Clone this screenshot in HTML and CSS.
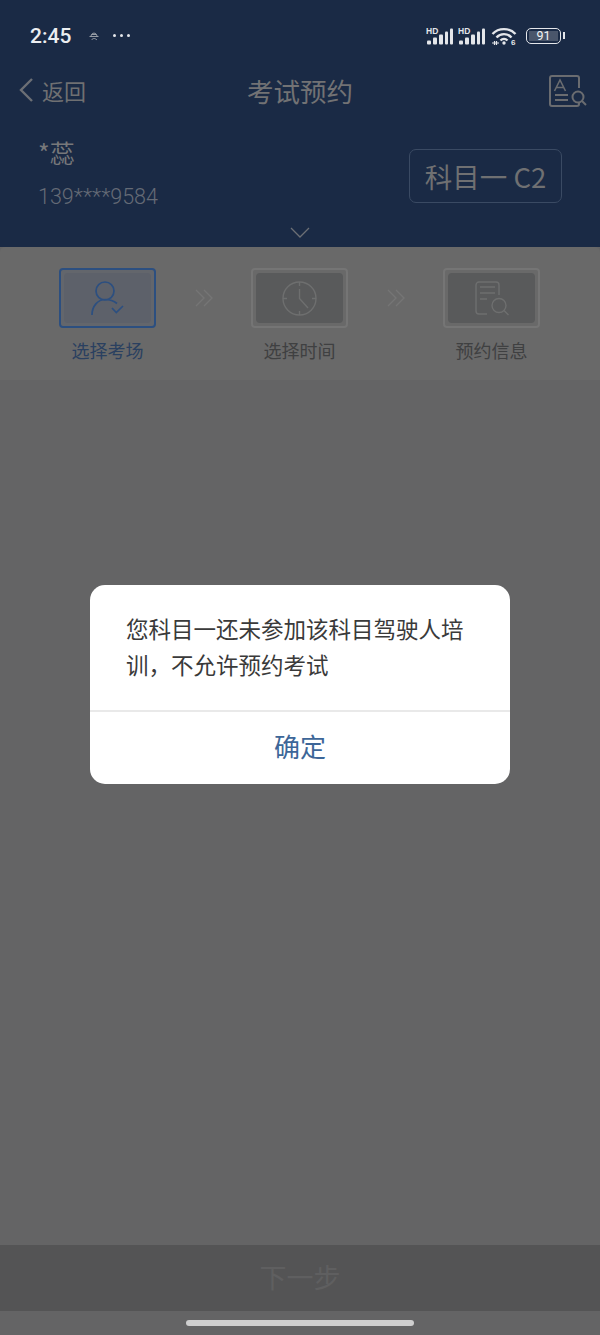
FILE: index.html
```html
<!DOCTYPE html>
<html lang="zh-CN">
<head>
    <meta charset="UTF-8">
    <meta name="viewport" content="width=device-width, initial-scale=1.0">
    <title>考试预约</title>
    <link rel="stylesheet" href="styles.css">
</head>
<body>
<div class="page">

    <header class="top">
        <div class="status">
            <span class="time">2:45</span>
            <svg class="hat" width="10" height="9" viewBox="0 0 10 9" fill="none" stroke="#a4a8af" stroke-width="0.900">
                <path d="M2 4.500 C2 0 8 0 8 4.500 M0.500 4.500 H9.500 M2.500 8 C4 6 6 6 8 8 M3 2.500 H7"/>
            </svg>
            <span class="dots"><i></i><i></i><i></i></span>
            <div class="status-right">
                <svg width="28" height="18" viewBox="0 0 28 18" fill="#e4e6ea">
                    <text x="0" y="7" class="hd">HD</text>
                    <rect x="1" y="13.500" width="4" height="4" rx="1"/>
                    <rect x="7" y="10.500" width="4" height="7" rx="1"/>
                    <rect x="13" y="7.500" width="4" height="10" rx="1"/>
                    <rect x="19" y="4.500" width="3" height="13" rx="1"/>
                    <rect x="24" y="1.500" width="3" height="16" rx="1"/>
                </svg>
                <svg width="28" height="18" viewBox="0 0 28 18" fill="#e4e6ea">
                    <text x="0" y="7" class="hd">HD</text>
                    <rect x="1" y="13.500" width="4" height="4" rx="1"/>
                    <rect x="7" y="10.500" width="4" height="7" rx="1"/>
                    <rect x="13" y="7.500" width="4" height="10" rx="1"/>
                    <rect x="19" y="4.500" width="3" height="13" rx="1"/>
                    <rect x="24" y="1.500" width="3" height="16" rx="1"/>
                </svg>
                <svg class="wifi" width="27" height="22" viewBox="0 0 27 22" fill="none" stroke="#e4e6ea" stroke-width="2.400">
                    <path d="M1.500 7 C7.500 0.500 18.500 0.500 24.500 7"/>
                    <path d="M5.500 10.500 C9.500 6 16.500 6 20.500 10.500"/>
                    <path d="M9.500 13.500 C11.500 11.500 14.500 11.500 16.500 13.500"/>
                    <circle cx="13" cy="16" r="1.700" fill="#e4e6ea" stroke="none"/>
                    <path d="M1 16 H8 M3.500 14 V18 M5.500 14 V18" stroke-width="1.200"/>
                    <text x="20" y="18" class="six" stroke="none" fill="#e4e6ea">6</text>
                </svg>
                <div class="battery"><span class="level">91</span></div>
            </div>
        </div>

        <div class="nav">
            <div class="back">
                <svg width="16" height="26" viewBox="0 0 16 26" fill="none" stroke="#6c6f75" stroke-width="2.400">
                    <path d="M14 2 L3 13 L14 24"/>
                </svg>
                <span>返回</span>
            </div>
            <h1 class="title">考试预约</h1>
            <svg class="doc-search" width="38" height="34" viewBox="0 0 38 34" fill="none" stroke="#6a6c70" stroke-width="2">
                <path d="M30 13 V3 a2 2 0 0 0 -2 -2 H3 a2 2 0 0 0 -2 2 V29 a2 2 0 0 0 2 2 H28 a2 2 0 0 0 2 -2 V28"/>
                <path d="M5.500 16 L11 5 L16.500 16 M7.500 12.500 H14.500" stroke-width="1.600"/>
                <path d="M6 20 H19 M6 25 H19"/>
                <circle cx="29" cy="22" r="5.500"/>
                <path d="M33 26 L37 30"/>
            </svg>
        </div>

        <div class="user">
            <div class="user-info">
                <div class="user-name">*蕊</div>
                <div class="user-phone">139****9584</div>
            </div>
            <div class="subject">科目一 C2</div>
        </div>

        <svg class="chevron" width="20" height="11" viewBox="0 0 20 11" fill="none" stroke="#6c6f75" stroke-width="1.300">
            <path d="M1 1 L10 10 L19 1"/>
        </svg>
    </header>

    <section class="steps">
        <div class="step step-active">
            <div class="step-box">
                <div class="step-inner">
                    <svg width="34" height="35" viewBox="0 0 34 35" fill="none" stroke="#2c4f80" stroke-width="1.700">
                        <circle cx="14" cy="10" r="9"/>
                        <path d="M1 34 C1 25 7 18.500 14 18.500 C19 18.500 23 20 26 22.500"/>
                        <path d="M21 27 L25.300 31.500 L32 25"/>
                    </svg>
                </div>
            </div>
            <div class="step-label">选择考场</div>
        </div>
        <svg class="arrows" width="18" height="18" viewBox="0 0 18 18" fill="none" stroke="#757575" stroke-width="1.400">
            <path d="M1 1 L9 9 L1 17 M9 1 L17 9 L9 17"/>
        </svg>
        <div class="step">
            <div class="step-box">
                <div class="step-inner">
                    <svg width="35" height="35" viewBox="0 0 35 35" fill="none" stroke="#6e6f6f" stroke-width="1.400">
                        <circle cx="17.500" cy="17.500" r="16.500"/>
                        <path d="M17.500 1 V5 M1 17.500 H5 M34 17.500 H30 M17.500 34 V30"/>
                        <path d="M17.500 8 V17.500 L26 27"/>
                    </svg>
                </div>
            </div>
            <div class="step-label">选择时间</div>
        </div>
        <svg class="arrows" width="18" height="18" viewBox="0 0 18 18" fill="none" stroke="#757575" stroke-width="1.400">
            <path d="M1 1 L9 9 L1 17 M9 1 L17 9 L9 17"/>
        </svg>
        <div class="step">
            <div class="step-box">
                <div class="step-inner">
                    <svg width="34" height="35" viewBox="0 0 34 35" fill="none" stroke="#6e6f6f" stroke-width="1.400">
                        <path d="M12 33 H4 a3 3 0 0 1 -3 -3 V4 a3 3 0 0 1 3 -3 H21 a3 3 0 0 1 3 3 V14"/>
                        <path d="M5 6 H20 M5 12 H20 M5 18 H12"/>
                        <circle cx="24" cy="24.500" r="7"/>
                        <path d="M29 29.500 L33.500 34"/>
                    </svg>
                </div>
            </div>
            <div class="step-label">预约信息</div>
        </div>
    </section>

    <main class="content"></main>

    <button class="next" type="button">下一步</button>
    <div class="home-area"><div class="home-bar"></div></div>

    <!-- dialog over the dimmed page -->
    <div class="overlay">
        <div class="dialog">
            <p class="dialog-text">您科目一还未参加该科目驾驶人培训，不允许预约考试</p>
            <div class="dialog-btn">确定</div>
        </div>
    </div>

</div>
</body>
</html>
```

FILE: styles.css
```css
* {
    box-sizing: border-box;
}

body {
    margin: 0;
    font-family: "Noto Sans CJK SC", "Noto Sans", sans-serif;
    background-color: #646465;
}

.page {
    position: relative;
    width: 600px;
    height: 1335px;
    display: flex;
    flex-direction: column;
    overflow: hidden;
}

/* navy header */
.top {
    height: 247px;
    background-color: #1a2a45;
    display: flex;
    flex-direction: column;
    color: #6f7072;
}

.status {
    height: 72px;
    padding: 24px 39px 0 30px;
    display: flex;
    align-items: flex-start;
}

.time {
    font-family: Roboto, sans-serif;
    font-size: 21px;
    font-weight: 500;
    line-height: 24px;
    color: #eceef1;
}

.hat {
    margin: 8px 0 0 18px;
}

.dots {
    display: flex;
    gap: 4px;
    margin: 10px 0 0 14px;
}

.dots i {
    width: 3px;
    height: 3px;
    border-radius: 50%;
    background-color: #e4e6ea;
}

.status-right {
    margin-left: auto;
    display: flex;
    align-items: flex-start;
    gap: 4px;
    margin-top: 3px;
}

.hd {
    font-family: "Liberation Sans", sans-serif;
    font-size: 8.500px;
    font-weight: 700;
}

.six {
    font-family: "Liberation Sans", sans-serif;
    font-size: 8px;
    font-weight: 700;
}

.wifi {
    margin-left: 1px;
}

.battery {
    position: relative;
    width: 35px;
    height: 16px;
    margin-left: 4px;
    margin-top: 1px;
    border: 1.500px solid #e4e6ea;
    border-radius: 5px;
    padding: 2px;
    display: flex;
}

.battery::after {
    content: "";
    position: absolute;
    right: -5px;
    top: 3px;
    width: 2px;
    height: 7px;
    background-color: #e4e6ea;
}

.level {
    flex: 1;
    background-color: #4a566b;
    color: #f2f3f5;
    font-family: Roboto, sans-serif;
    font-size: 12.500px;
    line-height: 9px;
    text-align: center;
}

.nav {
    height: 44px;
    position: relative;
    display: flex;
    align-items: flex-start;
    justify-content: center;
}

.back {
    position: absolute;
    left: 18px;
    top: 5px;
    display: flex;
    align-items: center;
    gap: 8px;
    font-size: 22px;
    line-height: 26px;
}

.title {
    margin: 0;
    font-size: 26.500px;
    font-weight: 400;
    line-height: 38px;
    color: #727274;
}

.doc-search {
    position: absolute;
    left: 549px;
    top: 3px;
}

.user {
    height: 100px;
    padding: 6px 38px 0;
    display: flex;
    justify-content: space-between;
}

.user-info {
    padding-top: 14px;
}

.user-name {
    font-size: 25px;
    line-height: 32px;
    color: #77787a;
}

.user-phone {
    margin-top: 16px;
    font-family: Roboto, sans-serif;
    font-size: 21.500px;
    font-weight: 300;
    line-height: 26px;
    color: #656b76;
}

.subject {
    width: 153px;
    height: 54px;
    margin-top: 27px;
    border: 1px solid #3a4a63;
    border-radius: 7px;
    font-size: 27.500px;
    line-height: 52px;
    text-align: center;
    white-space: nowrap;
    color: #6f7072;
}

.chevron {
    align-self: center;
    margin-top: 11px;
    flex-shrink: 0;
}

/* steps panel */
.steps {
    height: 133px;
    padding: 21px 60px 0 59px;
    background-color: #696969;
    border-radius: 5px 5px 0 0;
    display: flex;
    align-items: flex-start;
    justify-content: space-between;
}

.step {
    width: 97px;
}

.step-box {
    height: 60px;
    border: 2px solid #757575;
    border-radius: 4px;
    padding: 3px;
    display: flex;
}

.step-inner {
    flex: 1;
    border-radius: 4px;
    background-color: #595a5b;
    display: flex;
    align-items: center;
    justify-content: center;
}

.step-active .step-box {
    border-color: #2c4f80;
    background-color: #63666c;
}

.step-active .step-inner {
    background-color: #5d616a;
}

.step-label {
    margin-top: 10px;
    font-size: 18px;
    line-height: 24px;
    text-align: center;
    white-space: nowrap;
    color: #3f4041;
}

.step-active .step-label {
    color: #2a4060;
}

.arrows {
    margin-top: 21px;
}

.content {
    flex: 1;
    background-color: #646465;
}

.next {
    height: 66px;
    border: none;
    padding: 0 0 4px;
    background-color: #545455;
    color: #5f5f60;
    font-family: inherit;
    font-size: 27px;
}

.home-area {
    height: 24px;
    background-color: #646465;
    padding-top: 9px;
    display: flex;
    justify-content: center;
}

.home-bar {
    width: 228px;
    height: 6px;
    border-radius: 3px;
    background-color: #cfcfcf;
}

/* dialog */
.overlay {
    position: absolute;
    inset: 0;
    padding-top: 585px;
    display: flex;
    justify-content: center;
    align-items: flex-start;
}

.dialog {
    width: 420px;
    height: 199px;
    background-color: #fff;
    border-radius: 15px;
    overflow: hidden;
}

.dialog-text {
    height: 127px;
    margin: 0;
    padding: 25px 36px 0;
    border-bottom: 2px solid #e9e9e9;
    font-size: 22.500px;
    line-height: 36px;
    color: #3a3a3a;
}

.dialog-btn {
    height: 68px;
    line-height: 68px;
    text-align: center;
    font-size: 26px;
    color: #3d6698;
}
```
